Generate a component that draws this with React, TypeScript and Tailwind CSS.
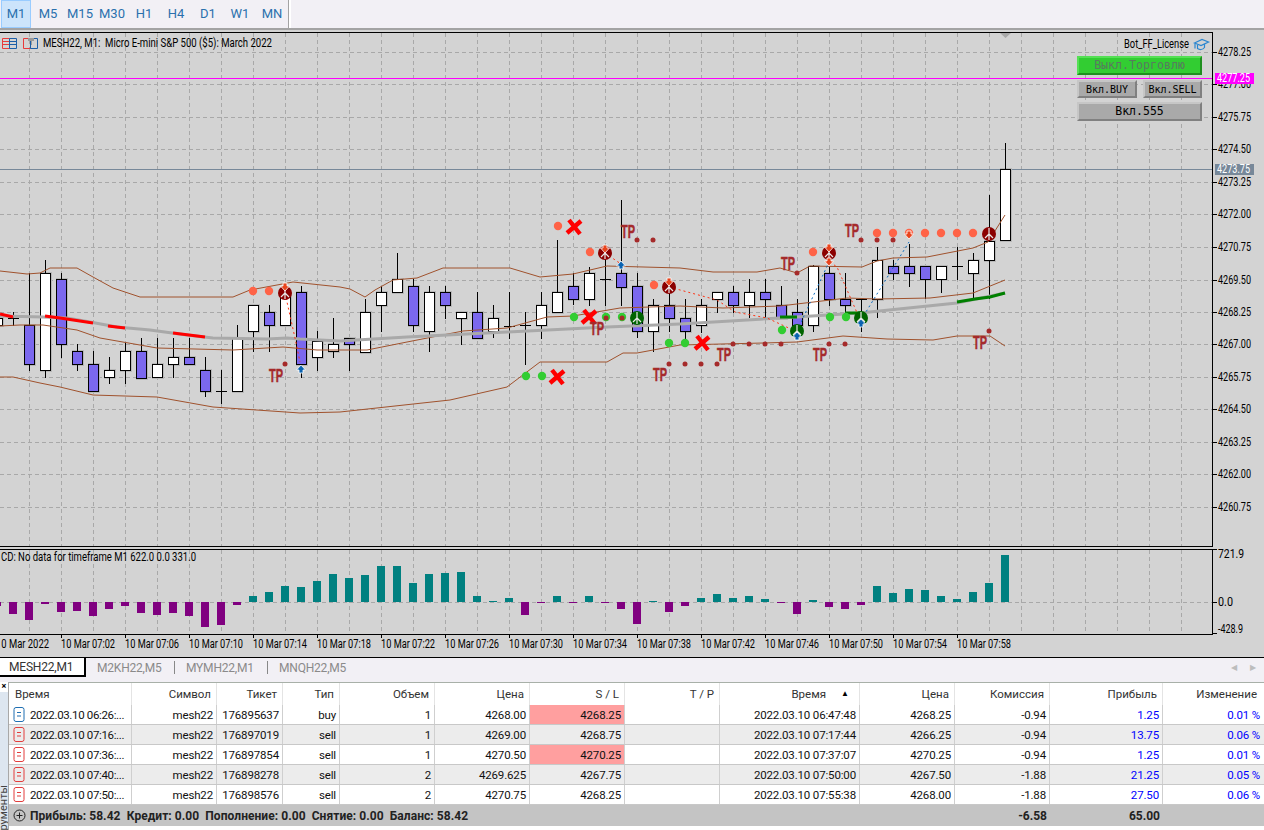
import React from 'react';

type Candle = [number, number, number, number, number, 'w' | 'p' | 'c'];

const candles: Candle[] = [
  [-3, 312, 330, 318, 325, 'w'], [13, 312, 326, 318, 318, 'c'], [29, 273, 371, 325, 364, 'p'], [45, 260, 378, 273, 370, 'w'],
  [61, 273, 358, 279, 344, 'p'], [77, 344, 371, 351, 364, 'p'], [93, 351, 391, 364, 391, 'p'], [109, 357, 384, 370, 377, 'w'],
  [125, 343, 384, 351, 370, 'w'], [141, 338, 378, 351, 378, 'p'], [157, 338, 378, 364, 377, 'w'], [173, 338, 378, 357, 364, 'w'],
  [189, 338, 364, 357, 364, 'p'], [205, 357, 397, 370, 391, 'p'], [221, 370, 404, 391, 391, 'c'], [237, 325, 391, 338, 391, 'w'],
  [253, 305, 352, 305, 331, 'w'], [269, 305, 352, 312, 325, 'p'], [285, 283, 325, 293, 325, 'w'], [301, 286, 378, 292, 364, 'p'],
  [317, 331, 371, 341, 357, 'w'], [333, 318, 358, 344, 351, 'w'], [349, 338, 371, 338, 344, 'p'], [365, 299, 352, 312, 352, 'w'],
  [381, 286, 332, 292, 305, 'w'], [397, 253, 292, 279, 292, 'w'], [413, 279, 332, 286, 325, 'p'], [429, 286, 352, 292, 331, 'w'],
  [445, 286, 319, 292, 305, 'p'], [461, 312, 345, 312, 318, 'w'], [477, 292, 338, 312, 338, 'p'], [493, 305, 338, 318, 331, 'w'],
  [509, 292, 339, 326, 326, 'c'], [525, 312, 365, 325, 325, 'c'], [541, 292, 339, 305, 325, 'w'], [557, 240, 312, 292, 312, 'w'],
  [573, 273, 305, 286, 299, 'p'], [589, 267, 306, 273, 299, 'w'], [605, 252, 306, 279, 279, 'c'], [621, 200, 306, 273, 287, 'p'],
  [637, 273, 338, 286, 331, 'p'], [653, 299, 352, 305, 331, 'w'], [669, 280, 332, 305, 318, 'p'], [685, 299, 345, 318, 331, 'p'],
  [701, 299, 333, 305, 325, 'w'], [717, 292, 313, 292, 299, 'w'], [733, 286, 313, 292, 305, 'p'], [749, 279, 318, 292, 305, 'w'],
  [765, 279, 318, 292, 299, 'p'], [781, 286, 318, 305, 318, 'p'], [797, 299, 338, 312, 325, 'p'], [813, 265, 332, 266, 325, 'w'],
  [829, 267, 306, 273, 299, 'p'], [845, 273, 318, 299, 305, 'p'], [861, 299, 332, 299, 299, 'c'], [877, 247, 318, 260, 299, 'w'],
  [893, 260, 280, 266, 273, 'p'], [909, 244, 287, 266, 273, 'p'], [925, 266, 299, 266, 279, 'p'], [941, 266, 293, 266, 279, 'w'],
  [957, 247, 280, 266, 266, 'c'], [973, 253, 299, 260, 273, 'w'], [989, 195, 299, 241, 260, 'w'], [1005, 143, 240, 169, 240, 'w'],
];

// bars of the sub window: x and the far end of the bar, zero line at y=602
const bars: [number, number][] = [
  [-3, 606], [13, 614], [29, 620], [45, 604], [61, 612], [77, 611], [93, 616], [109, 609], [125, 606], [141, 613], [157, 615],
  [173, 613], [189, 616], [205, 627], [221, 625], [237, 605], [253, 596], [269, 592], [285, 586], [301, 587], [317, 581],
  [333, 574], [349, 578], [365, 575], [381, 566], [397, 566], [413, 583], [429, 574], [445, 573], [461, 572], [477, 596],
  [493, 601], [509, 598], [525, 615], [541, 603], [557, 596], [573, 603], [589, 596], [605, 603], [621, 609], [637, 624],
  [653, 601], [669, 612], [685, 606], [701, 598], [717, 594], [733, 598], [749, 596], [765, 599], [781, 603], [797, 614],
  [813, 600], [829, 607], [845, 609], [861, 605], [877, 586], [893, 593], [909, 589], [925, 590], [941, 596], [957, 599],
  [973, 592], [989, 583], [1005, 555],
];

const pts = (a: number[][]) => a.map((p) => p.join(',')).join(' ');

const upperBand = [[0, 271], [27, 274], [40, 273], [50, 268], [77, 268], [93, 277], [113, 288], [140, 297], [233, 297], [250, 290], [277, 285], [293, 282], [340, 287], [350, 289], [365, 297], [375, 290], [393, 280], [417, 278], [443, 268], [510, 268], [540, 277], [573, 274], [607, 266], [680, 268], [713, 272], [757, 272], [780, 268], [797, 273], [810, 266], [862, 267], [877, 261], [893, 258], [927, 257], [973, 248], [988, 242], [1005, 215]];
const midBand = [[0, 326], [20, 325], [43, 325], [77, 330], [100, 338], [157, 348], [233, 350], [283, 347], [317, 350], [340, 350], [367, 350], [407, 342], [463, 331], [507, 328], [547, 317], [573, 316], [620, 308], [680, 306], [723, 308], [780, 306], [847, 298], [877, 299], [930, 298], [973, 293], [1005, 280]];
const lowerBand = [[0, 377], [13, 377], [40, 383], [60, 387], [93, 395], [157, 397], [213, 407], [300, 413], [340, 412], [450, 400], [507, 387], [540, 362], [607, 362], [623, 353], [637, 353], [680, 345], [763, 343], [797, 342], [843, 336], [887, 339], [933, 340], [957, 336], [990, 336], [1005, 346]];
const maLine = [[0, 316], [43, 317], [67, 318], [90, 322], [117, 327], [150, 330], [187, 335], [213, 338], [267, 339], [287, 338], [300, 339], [340, 341], [407, 337], [507, 332], [607, 327], [680, 324], [780, 318], [860, 313], [957, 303], [1005, 293]];

const redSegs = [[[0, 314], [13, 317]], [[45, 316], [60, 318], [93, 323]], [[108, 326], [125, 328]], [[173, 333], [205, 337]]];
const greenSegs = [[[780, 317], [797, 317]], [[845, 313], [860, 313]], [[957, 302], [975, 299], [990, 297], [1005, 293]]];

const salmonDots = [[253, 291], [269, 291], [558, 226], [590, 252], [654, 285], [813, 252], [877, 233], [893, 233], [909, 233], [925, 233], [941, 233], [957, 233], [973, 233]];
const greenDots = [[526, 376], [542, 376], [574, 317], [606, 317], [622, 317], [669, 343], [685, 343], [782, 330], [830, 317], [846, 317]];
const smallDots = [[285, 364], [637, 240], [653, 240], [669, 364], [606, 318], [622, 318], [685, 364], [701, 364], [717, 364], [733, 344], [749, 344], [765, 344], [781, 344], [829, 344], [845, 344], [797, 273], [861, 240], [877, 240], [893, 240], [989, 331]];
const crosses = [[574, 227], [589, 317], [557, 377], [702, 343]];
const tpLabels = [[276, 375], [628, 231], [597, 328], [660, 374], [724, 354], [788, 263], [820, 354], [852, 230], [980, 342]];

const redRings = [[285, 293], [605, 253], [669, 287], [829, 253], [989, 234]];
const greenRings = [[637, 318], [797, 331], [861, 318]];
const downArrows = [[285, 287], [605, 249], [669, 282], [829, 248], [829, 262], [909, 235]];
const upArrows = [[301, 369], [621, 265], [797, 336], [861, 323]];

const redDotted = [[[285, 293], [295, 338], [300, 362]], [[605, 253], [621, 264]], [[669, 287], [717, 300], [735, 312], [767, 318], [793, 330]], [[830, 262], [837, 267], [858, 315]]];
const blueDotted = [[[797, 331], [829, 262]], [[861, 320], [909, 242]]];

const priceLabels = ['4278.25', '4277.00', '4275.75', '4274.50', '4273.25', '4272.00', '4270.75', '4269.50', '4268.25', '4267.00', '4265.75', '4264.50', '4263.25', '4262.00', '4260.75'];
const priceY = [52, 84, 117, 149, 182, 214, 247, 280, 312, 344, 377, 409, 442, 474, 507];
const timeLabels = ['07:02', '07:06', '07:10', '07:14', '07:18', '07:22', '07:26', '07:30', '07:34', '07:38', '07:42', '07:46', '07:50', '07:54', '07:58'];
const gridX = Array.from({ length: 37 }, (_, i) => 29 + i * 32);

const Ring = ({ x, y, color }: { x: number; y: number; color: string }) => (
  <g>
    <circle cx={x} cy={y} r={7} fill={color} />
    <path d={`M${x} ${y - 6}V${y + 6}M${x} ${y}L${x - 4} ${y + 4}M${x} ${y}L${x + 4} ${y + 4}`} stroke="#e8e8e8" strokeWidth={1.2} fill="none" />
  </g>
);

const ChartPlot = () => (
  <svg width={1264} height={627} viewBox="0 30 1264 627" className="block [font-family:Roboto,sans-serif]">
    {/* grid */}
    <g stroke="#a8a8a8" strokeDasharray="4 3" shapeRendering="crispEdges">
      {gridX.map((x) => (
        <line key={x} x1={x + 0.5} x2={x + 0.5} y1={33} y2={546} />
      ))}
      {gridX.map((x) => (
        <line key={x} x1={x + 0.5} x2={x + 0.5} y1={550} y2={634} />
      ))}
      {priceY.map((y) => (
        <line key={y} x1={0} x2={1212} y1={y + 0.5} y2={y + 0.5} />
      ))}
      <line x1={0} x2={1212} y1={602.5} y2={602.5} />
    </g>

    <line x1={0} x2={1212} y1={169.5} y2={169.5} stroke="#778899" shapeRendering="crispEdges" />
    <line x1={0} x2={1212} y1={78.5} y2={78.5} stroke="#ff00ff" shapeRendering="crispEdges" />

    {/* candles */}
    <g shapeRendering="crispEdges">
      {candles.map(([x, hi, lo, top, bot, kind]) => (
        <g key={x}>
          {kind !== 'c' && <rect x={x - 5} y={top - 1} width={12} height={bot - top + 3} fill="#b8b8b8" />}
          <rect x={x} y={hi} width={1} height={lo - hi} fill="#000" />
          {kind === 'c' ? (
            <rect x={x - 5} y={top} width={11} height={1} fill="#000" />
          ) : (
            <rect x={x - 4.5} y={top + 0.5} width={10} height={bot - top} fill={kind === 'w' ? '#fff' : '#7b68ee'} stroke="#000" />
          )}
        </g>
      ))}
    </g>

    {/* bands */}
    <g fill="none" stroke="#a0522d" strokeWidth={1}>
      <polyline points={pts(upperBand)} />
      <polyline points={pts(midBand)} />
      <polyline points={pts(lowerBand)} />
    </g>
    <polyline points={pts(maLine)} fill="none" stroke="#a9a9a9" strokeWidth={3} />
    {redSegs.map((s, i) => (
      <polyline key={i} points={pts(s)} fill="none" stroke="#ff0000" strokeWidth={3} />
    ))}
    {greenSegs.map((s, i) => (
      <polyline key={i} points={pts(s)} fill="none" stroke="#008000" strokeWidth={3} />
    ))}

    {redDotted.map((s, i) => (
      <polyline key={i} points={pts(s)} fill="none" stroke="#ff3010" strokeDasharray="2 3" />
    ))}
    {blueDotted.map((s, i) => (
      <polyline key={i} points={pts(s)} fill="none" stroke="#0a6cc0" strokeDasharray="2 3" />
    ))}

    {/* signal marks */}
    {salmonDots.map(([x, y]) => (
      <circle key={x} cx={x} cy={y} r={4.2} fill="#ff6347" />
    ))}
    {greenDots.map(([x, y]) => (
      <circle key={x} cx={x} cy={y} r={4.2} fill="#32cd32" />
    ))}
    {smallDots.map(([x, y]) => (
      <circle key={x} cx={x} cy={y} r={2.5} fill="#a52a2a" />
    ))}
    {crosses.map(([x, y]) => (
      <path key={x} d={`M${x - 7} ${y + 6}L${x + 7} ${y - 6}M${x - 5} ${y - 7}L${x + 6} ${y + 7}`} stroke="#ff0000" strokeWidth={4.4} fill="none" />
    ))}
    {tpLabels.map(([x, y]) => (
      <text key={x} x={x} y={y + 6.5} textAnchor="middle" fontSize={18} fontWeight={700} fill="#a52a2a" stroke="#a52a2a" strokeWidth={0.5} textLength={14} lengthAdjust="spacingAndGlyphs" className="[font-family:'Liberation_Sans_Narrow','Liberation_Sans',sans-serif]">
        TP
      </text>
    ))}
    {redRings.map(([x, y]) => (
      <Ring key={x} x={x} y={y} color="#8b0000" />
    ))}
    {greenRings.map(([x, y]) => (
      <Ring key={x} x={x} y={y} color="#006400" />
    ))}
    {downArrows.map(([x, y], i) => (
      <polygon key={i} points={`${x - 2},${y - 4} ${x + 2},${y - 4} ${x + 2},${y - 1} ${x + 4.5},${y - 1} ${x},${y + 4} ${x - 4.5},${y - 1} ${x - 2},${y - 1}`} fill="#e8431c" stroke="#fff" strokeWidth={0.8} />
    ))}
    {upArrows.map(([x, y], i) => (
      <polygon key={i} points={`${x - 2},${y + 4} ${x + 2},${y + 4} ${x + 2},${y + 1} ${x + 4.5},${y + 1} ${x},${y - 4} ${x - 4.5},${y + 1} ${x - 2},${y + 1}`} fill="#0a62b0" stroke="#fff" strokeWidth={0.8} />
    ))}

    {/* indicator window */}
    <g shapeRendering="crispEdges">
      {bars.map(([x, end]) => (
        <rect key={x} x={x - 4} y={Math.min(end, 602)} width={8} height={Math.abs(end - 602)} fill={end < 602 ? '#008080' : '#800080'} />
      ))}
    </g>

    {/* frames */}
    <g stroke="#000" shapeRendering="crispEdges">
      <line x1={0} x2={1213} y1={32.5} y2={32.5} />
      <line x1={0} x2={1213} y1={546.5} y2={546.5} />
      <line x1={0} x2={1213} y1={549.5} y2={549.5} />
      <line x1={0} x2={1213} y1={634.5} y2={634.5} />
      <line x1={1212.5} x2={1212.5} y1={32} y2={547} />
      <line x1={1212.5} x2={1212.5} y1={549} y2={635} />
      {priceY.map((y) => (
        <line key={y} x1={1213} x2={1217} y1={y + 0.5} y2={y + 0.5} />
      ))}
      <line x1={1213} x2={1217} y1={549.5} y2={549.5} />
      <line x1={1213} x2={1217} y1={602.5} y2={602.5} />
      <line x1={1213} x2={1217} y1={633.5} y2={633.5} />
      {timeLabels.map((_, i) => (
        <line key={i} x1={61.5 + i * 64} x2={61.5 + i * 64} y1={635} y2={638} />
      ))}
    </g>
    <polygon points="1000,33 1011,33 1005.5,38" fill="#a8a8a8" />

    {/* axis text */}
    <g fontSize={12} fill="#000">
      {priceLabels.map((p, i) => (
        <text key={p} x={1218} y={priceY[i] + 4} textLength={33} lengthAdjust="spacingAndGlyphs">{p}</text>
      ))}
      <text x={1218} y={558} textLength={26} lengthAdjust="spacingAndGlyphs">721.9</text>
      <text x={1218} y={606} textLength={15} lengthAdjust="spacingAndGlyphs">0.0</text>
      <text x={1218} y={633} textLength={25} lengthAdjust="spacingAndGlyphs">-428.9</text>
      <text x={-4} y={648} textLength={53} lengthAdjust="spacingAndGlyphs">10 Mar 2022</text>
      {timeLabels.map((t, i) => (
        <text key={t} x={61 + i * 64} y={648} textLength={54} lengthAdjust="spacingAndGlyphs">{`10 Mar ${t}`}</text>
      ))}
      <text x={43} y={47} textLength={229} lengthAdjust="spacingAndGlyphs">MESH22, M1:{'\u00a0\u00a0'}Micro E-mini S&amp;P 500 ($5): March 2022</text>
      <text x={1} y={561} textLength={195} lengthAdjust="spacingAndGlyphs">CD: No data for timeframe M1 622.0 0.0 331.0</text>
      <text x={1124} y={48} textLength={65} lengthAdjust="spacingAndGlyphs">Bot_FF_License</text>
    </g>

    {/* price tags */}
    <rect x={1215} y={73} width={39} height={11} fill="#ff00ff" />
    <text x={1217} y={82} fontSize={12} fill="#fff" textLength={33} lengthAdjust="spacingAndGlyphs">4277.25</text>
    <rect x={1215} y={164} width={39} height={11} fill="#778899" />
    <text x={1217} y={173} fontSize={12} fill="#fff" textLength={33} lengthAdjust="spacingAndGlyphs">4273.75</text>

    {/* window icons */}
    <g fill="none" strokeWidth={1}>
      <path d="M2.5 38.5H9.5V48.5H2.5ZM2.5 41.5H9.5M2.5 44.5H9.5" stroke="#e83a3a" />
      <path d="M9.5 38.5H16.5V48.5H9.5ZM9.5 41.5H16.5M9.5 44.5H16.5" stroke="#1c5fa8" />
      <path d="M23.5 38.5H30.5V48.5H23.5Z" stroke="#e83a3a" />
      <path d="M30.5 38.5H37.5V48.5H30.5Z" stroke="#1c5fa8" />
      <rect x={28} y={38} width={6} height={3} fill="#9a9a9a" stroke="none" />
      <path d="M31.5 41V45" stroke="#9a9a9a" />
    </g>
    {/* license cap */}
    <g fill="none" stroke="#2a86d0" strokeWidth={1.2}>
      <path d="M1194.5 43L1202 39.5L1208.5 42L1201 45.5Z" />
      <path d="M1197.5 45V48.5C1199.5 50 1202.5 50 1204.5 47.5V44" />
      <path d="M1195 43.5V48.5" />
    </g>
  </svg>
);

const TradeButton = ({ className, label }: { className: string; label: string }) => (
  <div className={`absolute flex items-center justify-center border-2 border-t-[#c6c6c6] border-l-[#c6c6c6] border-b-[#808080] border-r-[#808080] bg-[#a9a9a9] [font-family:'DejaVu_Sans_Mono',monospace] text-black ${className}`}>
    {label}
  </div>
);

const OrderIcon = ({ color }: { color: string }) => (
  <svg width={12} height={15} viewBox="0 0 12 15" className="shrink-0">
    <rect x={1} y={0.5} width={10} height={14} rx={2} fill="none" stroke={color} />
    <path d="M4 5.5H8M4 9H8" stroke={color} />
  </svg>
);

const headers = ['Время', 'Символ', 'Тикет', 'Тип', 'Объем', 'Цена', 'S / L', 'T / P', 'Время', 'Цена', 'Комиссия', 'Прибыль', 'Изменение'];

const rows = [
  { side: 'buy', open: '2022.03.10 06:26:...', ticket: '176895637', vol: '1', price: '4268.00', sl: '4268.25', hit: true, close: '2022.03.10 06:47:48', cp: '4268.25', fee: '-0.94', pnl: '1.25', chg: '0.01 %' },
  { side: 'sell', open: '2022.03.10 07:16:...', ticket: '176897019', vol: '1', price: '4269.00', sl: '4268.75', hit: false, close: '2022.03.10 07:17:44', cp: '4266.25', fee: '-0.94', pnl: '13.75', chg: '0.06 %' },
  { side: 'sell', open: '2022.03.10 07:36:...', ticket: '176897854', vol: '1', price: '4270.50', sl: '4270.25', hit: true, close: '2022.03.10 07:37:07', cp: '4270.25', fee: '-0.94', pnl: '1.25', chg: '0.01 %' },
  { side: 'sell', open: '2022.03.10 07:40:...', ticket: '176898278', vol: '2', price: '4269.625', sl: '4267.75', hit: false, close: '2022.03.10 07:50:00', cp: '4267.50', fee: '-1.88', pnl: '21.25', chg: '0.05 %' },
  { side: 'sell', open: '2022.03.10 07:50:...', ticket: '176898576', vol: '2', price: '4270.75', sl: '4268.25', hit: false, close: '2022.03.10 07:55:38', cp: '4268.00', fee: '-1.88', pnl: '27.50', chg: '0.06 %' },
];

const gridCols = 'grid grid-cols-[123px_85px_66px_57px_95px_95px_95px_95px_140px_95px_95px_113px_102px]';
const cell = 'flex items-center justify-end pt-[2px] pr-[3px] border-r border-[#cfcfcf] whitespace-nowrap tracking-[-0.15px]';

export default function App() {
  return (
    <div className="w-[1264px] h-[830px] overflow-hidden flex flex-col bg-[#f2f0f5] [font-family:Roboto,sans-serif] text-[11.5px] text-[#111]">
      {/* timeframes */}
      <div className="h-[30px] shrink-0 flex border-b-2 border-[#a3a3a3]">
        <div className="w-[289px] flex border-r border-[#a3a3a3]">
          {['M1', 'M5', 'M15', 'M30', 'H1', 'H4', 'D1', 'W1', 'MN'].map((tf) => (
            <div
              key={tf}
              className={
                tf === 'M1'
                  ? 'w-[30px] h-[28px] mx-px flex items-center justify-center text-[13px] text-[#2a70ad] bg-[#cce4fb] border border-[#99ccff]'
                  : 'w-[32px] h-[28px] flex items-center justify-center text-[13px] text-[#2a70ad]'
              }
            >
              {tf}
            </div>
          ))}
        </div>
        <div className="w-[2px] bg-white" />
      </div>

      {/* chart */}
      <div className="relative h-[627px] shrink-0 bg-[#d3d3d3]">
        <ChartPlot />
        <div className="absolute left-[1077px] top-[26px] w-[125px] h-[19px] flex items-center justify-center border-2 border-t-[#55e055] border-l-[#55e055] border-b-[#1f8f1f] border-r-[#1f8f1f] bg-[#32cd32] text-[#587a60] text-[11.6px] whitespace-nowrap [font-family:'DejaVu_Sans_Mono',monospace]">
          Выкл.Торговлю
        </div>
        <TradeButton className="left-[1077px] top-[50px] w-[60px] h-[18px] text-[10px]" label="Вкл.BUY" />
        <TradeButton className="left-[1143px] top-[50px] w-[59px] h-[18px] text-[10px]" label="Вкл.SELL" />
        <TradeButton className="left-[1077px] top-[72px] w-[125px] h-[19px] text-[11.5px]" label="Вкл.555" />
      </div>

      {/* symbol tabs */}
      <div className="h-[25px] shrink-0 border-t border-black flex items-start relative">
        <div className="w-[86px] h-[19px] bg-white border-r-2 border-b-2 border-black text-[12px] tracking-[-0.2px] text-[#333] pl-[9px] leading-[18px]">MESH22,M1</div>
        <div className="flex items-center h-[19px] text-[12px] tracking-[-0.2px] text-[#8a8a8a]">
          <span className="ml-[11px] w-[77px]">M2KH22,M5</span>
          <span className="w-px h-[13px] bg-[#888]" />
          <span className="ml-[11px] w-[81px]">MYMH22,M1</span>
          <span className="w-px h-[13px] bg-[#888]" />
          <span className="ml-[11px]">MNQH22,M5</span>
        </div>
        <div className="ml-auto flex items-center gap-[13px] h-[19px] pr-[8px] text-[#bdbdbd] text-[8px]">
          <span>◀</span>
          <span>▶</span>
        </div>
      </div>

      {/* toolbox */}
      <div className="flex-1 flex bg-white">
        <div className="w-[8px] shrink-0 bg-[#dde6f0] flex flex-col items-center overflow-hidden">
          <div className="w-full h-[10px] bg-white text-[9px] leading-[8px] font-bold text-black text-center">×</div>
          <div className="mt-[93px] rotate-180 [writing-mode:vertical-rl] text-[11px] leading-[8px] text-[#444] whitespace-nowrap">Инструменты</div>
        </div>
        <div className="w-[1256px] border-l border-[#a8a8a8]">
          <div className={`${gridCols} h-[23px] border-t border-[#a8b0a8] text-[#333]`}>
            {headers.map((h, i) => (
              <div
                key={i}
                className={`flex items-center pt-px whitespace-nowrap border-r border-[#e4e4e4] ${i === 0 ? 'pl-[6px]' : i === 12 ? 'justify-end pr-[7px]' : i === 8 ? 'relative justify-end pr-[33px]' : 'justify-end pr-[5px]'}`}
              >
                {h}
                {i === 8 && <span className="absolute right-[10px] top-[5px] text-[8px] text-black">▲</span>}
              </div>
            ))}
          </div>
          {rows.map((r, i) => (
            <div key={r.ticket} className={`${gridCols} h-[20px] border-b border-[#c8c8c8] ${i % 2 ? 'bg-[#ececec]' : 'bg-white'}`}>
              <div className="flex items-center gap-[5px] pl-[4px] border-r border-[#cfcfcf] whitespace-nowrap tracking-[-0.35px]">
                <OrderIcon color={r.side === 'buy' ? '#1f6fb2' : '#e23c3c'} />
                <span className="pt-[2px]">{r.open}</span>
              </div>
              <div className={cell}>mesh22</div>
              <div className={cell}>{r.ticket}</div>
              <div className={cell}>{r.side}</div>
              <div className={cell}>{r.vol}</div>
              <div className={cell}>{r.price}</div>
              <div className={`${cell} ${r.hit ? 'bg-[#ff9f9f]' : ''}`}>{r.sl}</div>
              <div className={cell} />
              <div className={`${cell} tracking-[-0.3px]`}>{r.close}</div>
              <div className={cell}>{r.cp}</div>
              <div className={cell}>{r.fee}</div>
              <div className={`${cell} text-[#0000ff]`}>{r.pnl}</div>
              <div className={`${cell} text-[#0000ff] pr-[5px] border-r-0`}>{r.chg}</div>
            </div>
          ))}
          <div className={`${gridCols} h-[21px] bg-[#c4c4c4] font-bold text-[#222] text-[12px]`}>
            <div className="col-span-10 flex items-center pl-[4px] gap-[4px] whitespace-nowrap">
              <svg width={13} height={13} viewBox="0 0 13 13" className="shrink-0">
                <circle cx={6.5} cy={6.5} r={5.5} fill="none" stroke="#222" />
                <path d="M3.5 6.5H9.5M6.5 3.5V9.5" stroke="#222" />
              </svg>
              <span className="pt-px tracking-[0.06px]">Прибыль: 58.42&nbsp; Кредит: 0.00&nbsp; Пополнение: 0.00&nbsp; Снятие: 0.00&nbsp; Баланс: 58.42</span>
            </div>
            <div className="flex items-center justify-end pt-px pr-[3px]">-6.58</div>
            <div className="flex items-center justify-end pt-px pr-[3px]">65.00</div>
            <div />
          </div>
        </div>
      </div>
    </div>
  );
}
